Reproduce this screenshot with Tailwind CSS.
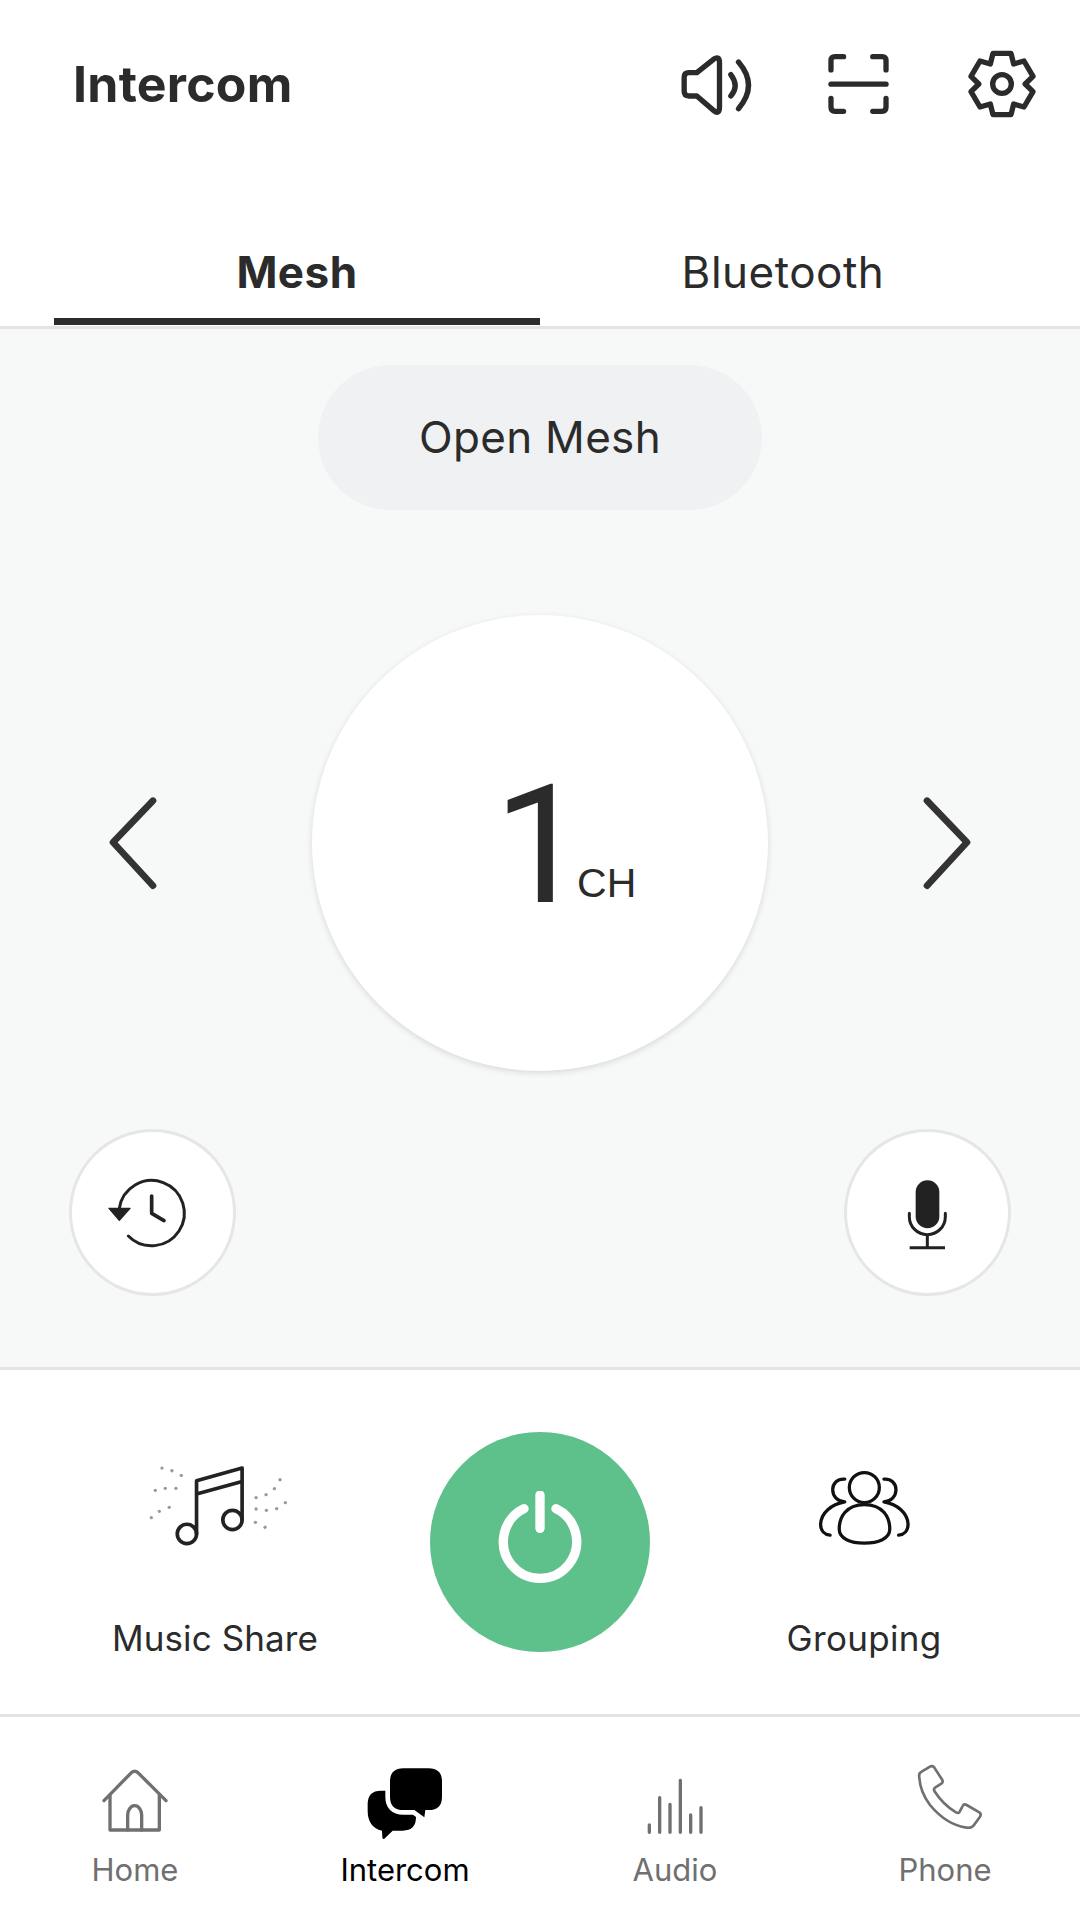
<!DOCTYPE html>
<html lang="en">
<head>
    <meta charset="UTF-8">
    <meta name="viewport" content="width=device-width, initial-scale=1.0">
    <title>Intercom</title>
    <script src="https://cdn.jsdelivr.net/npm/@tailwindcss/browser@4"></script>
</head>
<body class="bg-white text-[#2b2b2b] [font-family:Inter,sans-serif]">
<div class="w-[1080px] h-[1920px] flex flex-col overflow-hidden">

    <!-- Header -->
    <header class="h-[168px] shrink-0 flex items-center pl-[73px]">
        <h1 class="text-[50px] font-bold tracking-[0.25px] flex-1">Intercom</h1>
        <svg class="w-[77px] h-[65px] text-[#2b2b2b]" viewBox="120 90 230 195" fill="none" stroke="currentColor" stroke-width="16" stroke-linecap="round" stroke-linejoin="round">
            <path d="M146 152H170L220 112Q238 100 238 122V255Q238 280 220 265L170 222H146Q132 222 132 208V166Q132 152 146 152Z"/>
            <path d="M272 158Q298 192 272 222"/>
            <path d="M295 120Q355 190 295 260"/>
        </svg>
        <svg class="ml-[70px] w-[63px] h-[62px]" viewBox="560 100 190 185" fill="none" stroke="#2b2b2b" stroke-width="16" stroke-linecap="round" stroke-linejoin="round">
            <path d="M572 150V122Q572 110 584 110H610"/>
            <path d="M698 110H726Q738 110 738 122V150"/>
            <path d="M572 236V262Q572 275 584 275H610"/>
            <path d="M698 275H726Q738 275 738 262V236"/>
            <path d="M572 193H738"/>
        </svg>
        <svg class="ml-[77px] mr-[43px] w-[70px] h-[70px]" viewBox="-105 -105 210 210" fill="none" stroke="#2b2b2b" stroke-width="16" stroke-linejoin="round">
            <path d="M-27-92L27-92L35-60L66-69L93-23L69.5 0L93 23L66 69L35 60L27 92L-27 92L-35 60L-66 69L-93 23L-69.5 0L-93-23L-66-69L-35-60Z"/>
            <circle r="28"/>
        </svg>
    </header>

    <!-- Tabs -->
    <nav class="h-[161px] shrink-0 border-b-[3px] border-[#e4e4e4] px-[54px] grid grid-cols-2 text-[44px] tracking-[0.5px]">
        <div class="h-[157px] border-b-[7px] border-[#2c2c2c] flex items-center justify-center font-bold pt-[57px]">Mesh</div>
        <div class="flex items-center justify-center pt-[58px] h-[150px]">Bluetooth</div>
    </nav>

    <!-- Channel panel -->
    <main class="h-[1041px] shrink-0 bg-[#f7f8f8] border-b-[3px] border-[#e4e4e4] flex flex-col items-center pt-[36px]">
        <button class="w-[444px] h-[145px] rounded-full bg-[#f0f1f3] text-[44px] tracking-[0.3px] pb-[2px] flex items-center justify-center">Open Mesh</button>

        <div class="mt-[105px] w-full px-[103px] flex items-center justify-between">
            <svg class="w-[60px] h-[110px] mt-[2px]" viewBox="40 25 180 330" fill="none" stroke="#333" stroke-width="20" stroke-linecap="round" stroke-linejoin="round">
                <path d="M190 60L70 185L190 315"/>
            </svg>
            <div class="w-[456px] h-[456px] rounded-full bg-white shadow-[0_2px_6px_rgba(0,0,0,0.13)] flex items-baseline justify-center pt-[148px] pl-[50px]">
                <span class="text-[166px] tracking-[-10px] leading-[1] [font-family:Roboto,sans-serif]">1</span>
                <span class="text-[41px] leading-[1] -translate-y-[5px] [font-family:'Liberation_Sans',sans-serif]">CH</span>
            </div>
            <svg class="w-[60px] h-[110px] mt-[2px] -scale-x-100" viewBox="40 25 180 330" fill="none" stroke="#333" stroke-width="20" stroke-linecap="round" stroke-linejoin="round">
                <path d="M190 60L70 185L190 315"/>
            </svg>
        </div>

        <div class="mt-[58px] w-full px-[69px] flex justify-between">
            <button class="w-[167px] h-[167px] rounded-full bg-white border-[3px] border-[#e6e6e6] flex items-center justify-center">
                <svg class="w-[105px] h-[105px] shrink-0" viewBox="300 180 315 315" fill="none" stroke="#222" stroke-linecap="round" stroke-linejoin="round">
                    <path stroke-width="9" d="M385 408A98 98 0 1 0 358 325"/>
                    <path stroke-width="11" d="M455 288V340L492 362"/>
                    <path fill="#222" stroke-width="4" d="M327 325H390L358 361Z"/>
                </svg>
            </button>
            <button class="w-[167px] h-[167px] rounded-full bg-white border-[3px] border-[#e6e6e6] flex items-center justify-center">
                <svg class="w-[105px] h-[105px] shrink-0" viewBox="225 180 315 315" fill="none" stroke="#222" stroke-width="9">
                    <rect x="347" y="241" width="71" height="144" rx="35.5" fill="#222" stroke="none"/>
                    <path stroke-linecap="round" d="M328 340V350A54 54 0 0 0 436 350V340"/>
                    <path d="M382 402V443M329 443H435"/>
                </svg>
            </button>
        </div>
    </main>

    <!-- Actions -->
    <section class="h-[347px] shrink-0 border-b-[3px] border-[#e4e4e4] grid grid-cols-[430px_220px_430px]">
        <div class="flex flex-col items-center pt-[93px]">
            <svg class="w-[143px] h-[85px] ml-[6px]" viewBox="140 125 430 255" fill="none">
                <g fill="#999">
                    <circle cx="185" cy="140" r="5"/><circle cx="215" cy="148" r="5"/><circle cx="243" cy="162" r="5"/>
                    <circle cx="165" cy="207" r="5"/><circle cx="195" cy="201" r="5"/><circle cx="227" cy="201" r="5"/>
                    <circle cx="207" cy="258" r="5"/><circle cx="177" cy="270" r="5"/><circle cx="153" cy="289" r="5"/>
                    <circle cx="540" cy="175" r="5"/><circle cx="523" cy="202" r="5"/><circle cx="498" cy="220" r="5"/><circle cx="468" cy="229" r="5"/>
                    <circle cx="556" cy="244" r="5"/><circle cx="530" cy="262" r="5"/><circle cx="499" cy="267" r="5"/><circle cx="468" cy="263" r="5"/>
                    <circle cx="466" cy="303" r="5"/><circle cx="495" cy="318" r="5"/>
                </g>
                <g stroke="#222" stroke-width="11" stroke-linecap="round" stroke-linejoin="round">
                    <circle cx="260" cy="338" r="29"/>
                    <circle cx="397" cy="296" r="29"/>
                    <path d="M289 338V178L426 140V296M289 218L426 180"/>
                </g>
            </svg>
            <span class="mt-[64px] text-[35px] tracking-[0.1px]">Music Share</span>
        </div>

        <button class="self-center w-[220px] h-[220px] rounded-full bg-[#5ec08a] pb-[2px] flex items-center justify-center">
            <svg class="w-[100px] h-[100px]" viewBox="210 212 300 300" fill="none" stroke="#fff" stroke-width="28" stroke-linecap="round">
                <path d="M312 265A110 110 0 1 0 408 265"/>
                <path d="M360 224V324"/>
            </svg>
        </button>

        <div class="flex flex-col items-center pt-[98px] pr-[2px]">
            <svg class="w-[93px] h-[78px]" viewBox="110 140 285 235" fill="none" stroke="#111" stroke-width="10" stroke-linecap="round" stroke-linejoin="round">
                <circle cx="252" cy="198" r="46"/>
                <path d="M252 250C195 250 175 290 175 325C175 355 210 368 252 368C295 368 330 355 330 325C330 290 310 250 252 250Z"/>
                <path d="M192 172C170 170 155 185 155 205C155 225 170 240 192 242C150 250 120 275 118 310C118 330 130 342 147 344"/>
                <path d="M312 172C334 170 349 185 349 205C349 225 334 240 312 242C354 250 384 275 386 310C386 330 374 342 357 344"/>
            </svg>
            <span class="mt-[66px] text-[35px] tracking-[0.3px]">Grouping</span>
        </div>
    </section>

    <!-- Bottom navigation -->
    <footer class="flex-1 grid grid-cols-4 text-[31px] text-[#707070] pt-[43px]">
        <div class="flex flex-col items-center">
            <svg class="w-[80px] h-[80px]" viewBox="105 60 240 240" fill="none" stroke="#707070" stroke-width="10" stroke-linecap="round" stroke-linejoin="round">
                <path d="M132 182L215 97Q224 90 233 97L318 182"/>
                <path d="M150 165V270H298V165"/>
                <path d="M203 270V225A21 28 0 0 1 245 225V270"/>
            </svg>
            <span class="mt-[7px]">Home</span>
        </div>
        <div class="flex flex-col items-center text-black">
            <svg class="w-[80px] h-[80px]" viewBox="917 60 240 240">
                <path fill="#000" d="M965 152H1030Q1070 152 1070 192V232Q1070 272 1030 272H1000L975 296Q970 300 969 292L968 272Q925 262 925 212V192Q925 152 965 152Z"/>
                <path fill="#000" stroke="#fff" stroke-width="28" paint-order="stroke" stroke-linejoin="round" d="M1032 85H1108Q1148 85 1148 125V170Q1148 210 1108 210H1098L1095 232L1065 210H1032Q992 210 992 170V125Q992 85 1032 85Z"/>
            </svg>
            <span class="mt-[7px]">Intercom</span>
        </div>
        <div class="flex flex-col items-center">
            <svg class="w-[80px] h-[80px]" viewBox="105 60 240 240" fill="none" stroke="#707070" stroke-width="10" stroke-linecap="round">
                <path d="M148 255V277M179 173V277M210 193V277M241 121V277M272 225V277M303 203V277"/>
            </svg>
            <span class="mt-[7px]">Audio</span>
        </div>
        <div class="flex flex-col items-center">
            <svg class="w-[80px] h-[80px]" viewBox="915 60 240 240" fill="none" stroke="#707070" stroke-width="8" stroke-linejoin="round">
                <path d="M958 112Q955 100 965 95L990 80Q998 75 1003 83L1027 120Q1030 127 1024 131L1005 143Q1000 147 1003 153Q1030 195 1068 217Q1075 221 1079 215L1088 198Q1092 190 1100 195L1138 217Q1145 222 1140 230L1122 255Q1115 265 1100 263Q1040 255 990 195Q960 155 958 112Z"/>
            </svg>
            <span class="mt-[7px]">Phone</span>
        </div>
    </footer>
</div>
</body>
</html>
